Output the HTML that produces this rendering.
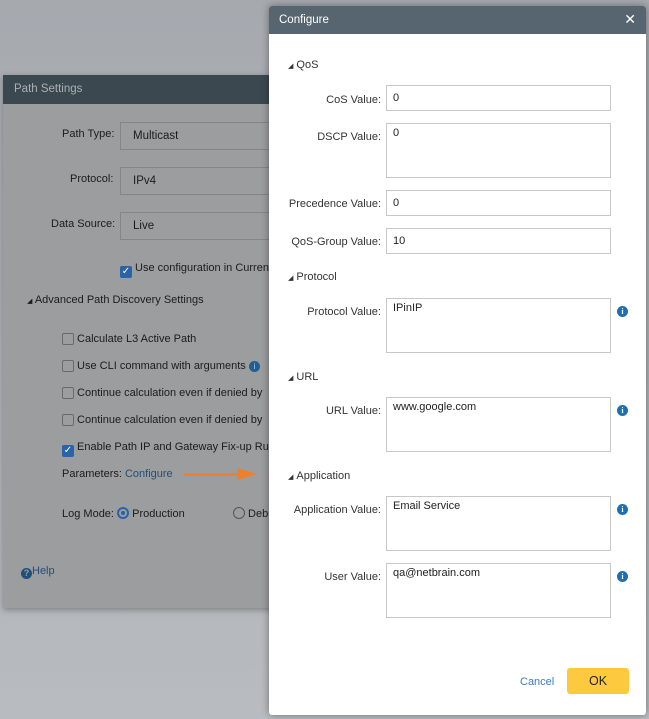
<!DOCTYPE html>
<html><head><style>
*{box-sizing:border-box;margin:0;padding:0}
body{width:649px;height:719px;overflow:hidden;position:relative;font-family:"Liberation Sans",sans-serif;font-size:11px;background:linear-gradient(180deg,#a6aaaf 0%,#aeb2b6 50%,#b8bcc0 100%);}
.abs{position:absolute}
.ps{left:3px;top:75px;width:280px;height:533px;background:#9c9d9e;box-shadow:0 2px 6px rgba(0,0,0,.3)}
.psh{height:29px;background:#3c4850;color:#a9b0b5;font-size:11.5px;padding:8px 11px}
.lbl{color:#1c1c1c;font-size:11px}
.box{border:1px solid #858585;background:#9c9d9e;color:#1c1c1c;padding:7px 12px;font-size:11.5px}
.cb{width:12px;height:12px;border:1px solid #6a6a6a;border-radius:2px;display:inline-block;vertical-align:-3px}
.cbc{background:#2a63a8;border-color:#2a63a8;color:#fff;font-size:10px;line-height:10px;text-align:center}
.cf{left:269px;top:6px;width:377px;height:709px;background:#fff;border-radius:3px;box-shadow:0 0 8px rgba(0,0,0,.4);overflow:hidden}
.cfh{height:28px;background:#56656f;color:#fff;padding:8px 10px;font-size:11.5px}
.r{position:absolute;text-align:right;width:180px;left:-68px;color:#333}
.in{position:absolute;left:117px;width:225px;border:1px solid #c8c8c8;padding:3px 6px;color:#222}
.sec{position:absolute;left:19px;color:#333}
.tri{font-size:7px;margin-right:3px}
.info{position:absolute;left:348px;width:11px;height:11px;border-radius:50%;background:#1e6eb0;color:#fff;font-size:8px;font-weight:bold;text-align:center;line-height:11px;font-family:"Liberation Serif",serif}
</style></head><body>
<div class="abs ps">
<div class="psh">Path Settings</div>
<div class="abs lbl" style="left:59px;top:53px">Path Type:</div>
<div class="abs box" style="left:117px;top:47px;width:170px;height:28px">Multicast</div>
<div class="abs lbl" style="left:67px;top:98px">Protocol:</div>
<div class="abs box" style="left:117px;top:92px;width:170px;height:28px">IPv4</div>
<div class="abs lbl" style="left:48px;top:143px">Data Source:</div>
<div class="abs box" style="left:117px;top:137px;width:170px;height:28px">Live</div>
<div class="abs lbl" style="left:117px;top:187px;white-space:nowrap"><span class="cb cbc">✓</span> Use configuration in Current</div>
<div class="abs lbl" style="left:24px;top:219px"><span style="font-size:7px">◢</span> Advanced Path Discovery Settings</div>
<div class="abs lbl" style="left:59px;top:258px;white-space:nowrap"><span class="cb"></span> Calculate L3 Active Path</div>
<div class="abs lbl" style="left:59px;top:285px;white-space:nowrap"><span class="cb"></span> Use CLI command with arguments <span style="display:inline-block;width:11px;height:11px;border-radius:50%;background:#1e5f94;color:#ccc;font-size:8px;text-align:center;line-height:11px">i</span></div>
<div class="abs lbl" style="left:59px;top:312px;white-space:nowrap"><span class="cb"></span> Continue calculation even if denied by</div>
<div class="abs lbl" style="left:59px;top:339px;white-space:nowrap"><span class="cb"></span> Continue calculation even if denied by</div>
<div class="abs lbl" style="left:59px;top:366px;white-space:nowrap"><span class="cb cbc">✓</span> Enable Path IP and Gateway Fix-up Rul</div>
<div class="abs lbl" style="left:59px;top:393px">Parameters: <span style="color:#1f4f7a">Configure</span></div>
<div class="abs" style="left:181px;top:398px;width:56px;height:3px;background:#f07f2a"></div>
<div class="abs" style="left:234px;top:393px;width:0;height:0;border-left:20px solid #f07f2a;border-top:6.5px solid transparent;border-bottom:6.5px solid transparent"></div>
<div class="abs lbl" style="left:59px;top:432px;white-space:nowrap">Log Mode: <span style="display:inline-block;width:12px;height:12px;border-radius:50%;border:2px solid #2a63a8;background:radial-gradient(#2a63a8 35%,transparent 40%);vertical-align:-2px"></span> Production</div>
<div class="abs lbl" style="left:230px;top:432px;white-space:nowrap"><span style="display:inline-block;width:12px;height:12px;border-radius:50%;border:1px solid #555;vertical-align:-2px"></span> Debu</div>
<div class="abs" style="left:18px;top:490px;color:#1f4f7a"><span style="display:inline-block;width:11px;height:11px;border-radius:50%;background:#1f4f7a;color:#9c9d9e;font-size:9px;text-align:center;line-height:11px;font-weight:bold;vertical-align:-2px">?</span>Help</div>
</div>
<div class="abs cf">
<div class="cfh">Configure<span style="position:absolute;right:10px;top:5px;font-size:14px;font-weight:300">✕</span></div>
<div class="sec" style="top:53px"><span class="tri">◢</span>QoS</div>
<div class="r" style="top:88px">CoS Value:</div><div class="in" style="top:79px;height:26px;padding-top:6px">0</div>
<div class="r" style="top:125px">DSCP Value:</div><div class="in" style="top:117px;height:55px">0</div>
<div class="r" style="top:192px">Precedence Value:</div><div class="in" style="top:184px;height:26px;padding-top:6px">0</div>
<div class="r" style="top:230px">QoS-Group Value:</div><div class="in" style="top:222px;height:26px;padding-top:6px">10</div>
<div class="sec" style="top:265px"><span class="tri">◢</span>Protocol</div>
<div class="r" style="top:300px">Protocol Value:</div><div class="in" style="top:292px;height:55px">IPinIP</div><div class="info" style="top:300px">i</div>
<div class="sec" style="top:365px"><span class="tri">◢</span>URL</div>
<div class="r" style="top:399px">URL Value:</div><div class="in" style="top:391px;height:55px">www.google.com</div><div class="info" style="top:399px">i</div>
<div class="sec" style="top:464px"><span class="tri">◢</span>Application</div>
<div class="r" style="top:498px">Application Value:</div><div class="in" style="top:490px;height:55px">Email Service</div><div class="info" style="top:498px">i</div>
<div class="r" style="top:565px">User Value:</div><div class="in" style="top:557px;height:55px">qa@netbrain.com</div><div class="info" style="top:565px">i</div>
<div class="abs" style="left:251px;top:670px;color:#3d7cc0">Cancel</div>
<div class="abs" style="left:298px;top:662px;width:62px;height:26px;background:#fdc93e;border-radius:3px;text-align:center;line-height:26px;font-size:12.5px;color:#222">OK</div>
</div>
</body></html>
